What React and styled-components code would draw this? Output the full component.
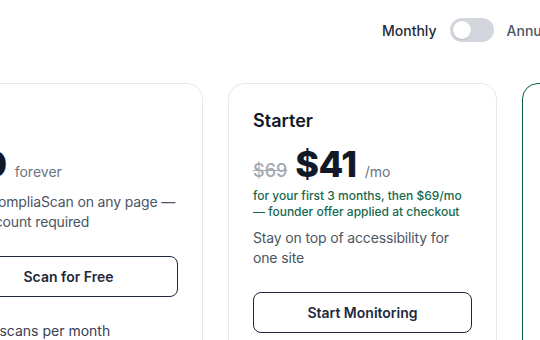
import React from 'react'
import styled, { createGlobalStyle } from 'styled-components'

const GlobalStyle = createGlobalStyle`
  html, body {
    margin: 0;
    padding: 0;
    background: #ffffff;
    font-family: Inter, "Noto Sans", sans-serif;
    overflow: hidden;
  }
`

const plans = [
  {
    name: 'Free',
    price: '$0',
    period: 'forever',
    desc: 'Run CompliaScan on any page — no account required',
    cta: 'Scan for Free',
    features: ['10 scans per month'],
  },
  {
    name: 'Starter',
    oldPrice: '$69',
    price: '$41',
    period: '/mo',
    note: 'for your first 3 months, then $69/mo — founder offer applied at checkout',
    desc: 'Stay on top of accessibility for one site',
    cta: 'Start Monitoring',
    features: ['Weekly automated scans'],
  },
  {
    name: 'Pro',
    oldPrice: '$149',
    price: '$89',
    period: '/mo',
    note: 'for your first 3 months, then $149/mo — founder offer applied at checkout',
    desc: 'For agencies and teams managing many sites',
    cta: 'Start Pro',
    featured: true,
    features: ['Daily automated scans'],
  },
]

const Page = styled.div`
  width: 540px;
  height: 340px;
  overflow: hidden;
`

const Wide = styled.div`
  width: 857px;
  margin-left: -66px;
`

const BillingRow = styled.div`
  display: flex;
  align-items: center;
  gap: 13px;
  height: 24px;
  padding: 18px 0 0 448px;
`

const BillingLabel = styled.span`
  font-size: 14px;
  font-weight: 500;
  color: ${p => (p.$active ? '#1f2937' : '#4b5563')};
`

const Switch = styled.button`
  width: 44px;
  height: 24px;
  border: none;
  border-radius: 999px;
  background: #d4d6dd;
  padding: 3px;
  display: flex;
  align-items: center;
  cursor: pointer;
`

const Knob = styled.span`
  width: 18px;
  height: 18px;
  border-radius: 50%;
  background: #ffffff;
  box-shadow: 0 1px 2px rgba(0, 0, 0, 0.12);
`

const Cards = styled.div`
  display: grid;
  grid-template-columns: repeat(3, 269px);
  gap: 25px;
  margin-top: 41px;
`

const Card = styled.div`
  border: ${p => (p.$featured ? '1.5px solid #0b5e45' : '1px solid #e5e7eb')};
  border-radius: 16px;
  padding: 24px 24px 23px;
  background: #ffffff;
  min-height: 300px;
`

const PlanName = styled.h3`
  margin: 0;
  font-size: 18px;
  line-height: 26px;
  font-weight: 600;
  color: #111827;
`

const PriceRow = styled.div`
  display: flex;
  align-items: baseline;
  gap: 8px;
  margin-top: 10px;
  height: 40px;
`

const OldPrice = styled.span`
  font-size: 18px;
  font-weight: 500;
  color: #a3a8b1;
  text-decoration: line-through;
`

const Price = styled.span`
  font-size: 36px;
  line-height: 40px;
  font-weight: 800;
  letter-spacing: -0.5px;
  color: #111827;
`

const Period = styled.span`
  font-size: 14px;
  color: #6b7280;
`

const Note = styled.p`
  margin: 4px 0 0;
  font-size: 12px;
  line-height: 16px;
  font-weight: 500;
  color: #17694c;
`

const Desc = styled.p`
  margin: 8px 0 0;
  font-size: 14px;
  line-height: 20px;
  letter-spacing: -0.15px;
  color: #4b5563;
`

const CtaButton = styled.button`
  display: block;
  width: 100%;
  height: 41px;
  margin-top: 24px;
  border: 1px solid #1e293b;
  border-radius: 8px;
  background: #ffffff;
  font-family: inherit;
  font-size: 14px;
  font-weight: 600;
  color: #1e293b;
  cursor: pointer;
`

const FeatureList = styled.ul`
  list-style: none;
  margin: 24px 0 0;
  padding: 0;
`

const Feature = styled.li`
  display: flex;
  align-items: center;
  gap: 8px;
  font-size: 14px;
  line-height: 20px;
  color: #374151;
`

const Check = () => (
  <svg width="14" height="14" viewBox="0 0 24 24" fill="none" stroke="#0b5e45" strokeWidth="3" strokeLinecap="round" strokeLinejoin="round">
    <path d="M20 6 9 17l-5-5" />
  </svg>
)

const App = () => {
  return (
    <Page>
      <GlobalStyle />
      <Wide>
        <BillingRow>
          <BillingLabel $active>Monthly</BillingLabel>
          <Switch aria-label="Toggle annual billing">
            <Knob />
          </Switch>
          <BillingLabel>Annually</BillingLabel>
        </BillingRow>
        <Cards>
          {plans.map(plan => (
            <Card key={plan.name} $featured={plan.featured}>
              <PlanName>{plan.name}</PlanName>
              <PriceRow>
                {plan.oldPrice && <OldPrice>{plan.oldPrice}</OldPrice>}
                <Price>{plan.price}</Price>
                <Period>{plan.period}</Period>
              </PriceRow>
              {plan.note && <Note>{plan.note}</Note>}
              <Desc>{plan.desc}</Desc>
              <CtaButton>{plan.cta}</CtaButton>
              <FeatureList>
                {plan.features.map(f => (
                  <Feature key={f}>
                    <Check />
                    {f}
                  </Feature>
                ))}
              </FeatureList>
            </Card>
          ))}
        </Cards>
      </Wide>
    </Page>
  )
}

export default App
